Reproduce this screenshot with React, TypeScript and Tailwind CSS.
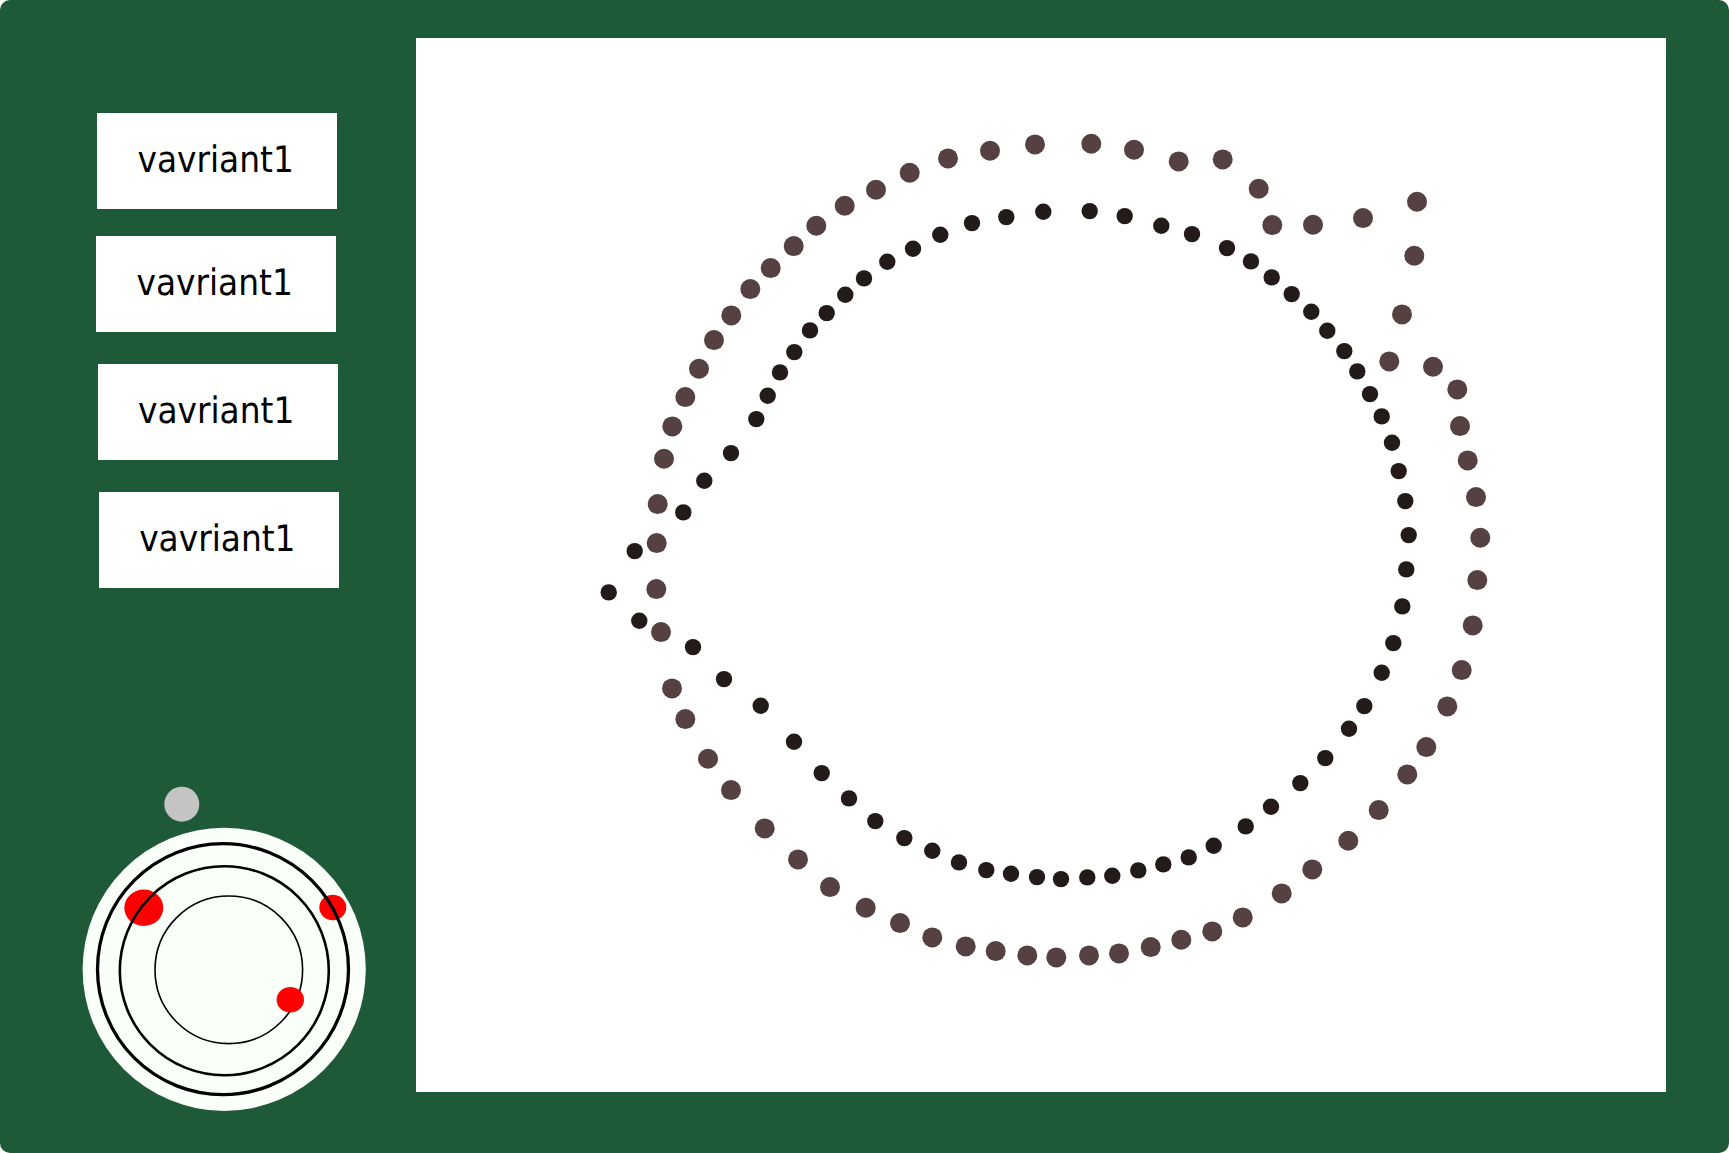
const brown: [number, number][] = [
  [948, 158], [909.7, 172.3], [876, 189.3], [844.7, 205.3], [816.3, 225.3], [793.7, 245.7], [770.7, 267.7],
  [750.3, 288.7], [731.3, 315], [714, 339.7], [699, 368.3], [685.3, 396.7], [672.3, 426], [664, 458.3], [657.7, 503.7],
  [656.7, 542.7], [656.3, 588.7], [661, 631.7], [672, 688], [685.3, 718.7], [708, 758.3], [731, 789.7], [764.7, 828],
  [798, 859], [830, 886.7], [865.7, 907.3], [900, 922.7], [932.3, 937], [965.7, 946], [995.7, 950.7], [1027.3, 955],
  [1056.3, 957], [1089, 955], [1119, 953], [1150.7, 946.7], [1181.3, 939.3], [1212.3, 931], [1242.7, 917], [1281.7, 893],
  [1312.3, 869], [1348.3, 840.3], [1378.7, 809.7], [1407.3, 774], [1426.3, 746.7], [1447.3, 706], [1461.7, 669.7],
  [1472.7, 625], [1477.3, 579.7], [1480.3, 537.3], [1476, 496.7], [1467.7, 460], [1460, 425.7], [1457.3, 389],
  [1433, 366.3], [1389.3, 361], [1402, 314], [1414.3, 255.3], [1417, 201.3], [1363, 217.7], [1313, 224.3], [1272.3, 224.7],
  [1258.7, 188.3], [1222.7, 159], [1178.7, 161], [1134, 149.3], [1091.3, 143.3], [1035, 144], [990, 150.3],
];

const dark: [number, number][] = [
  [972, 222.7], [940.3, 234.3], [913, 248.3], [887.3, 261.3], [864, 278], [845.3, 294.3], [826.7, 312.7], [810, 330],
  [794.3, 351.7], [780, 372], [767.7, 395.3], [756.3, 418.7], [731, 452.7], [704.3, 480.3], [683.3, 512], [634.7, 550.7],
  [608.7, 592], [639.3, 620.3], [693, 646.7], [724, 678.7], [760.7, 705.3], [794, 741.3], [821.7, 772.7], [849, 798],
  [875.3, 820.7], [904.3, 837.7], [932.3, 850.3], [959, 862], [986.3, 869.7], [1011, 873.3], [1037, 876.7], [1061, 878.7],
  [1087.3, 877], [1112.3, 875.3], [1138.3, 870], [1163.3, 864], [1188.7, 857], [1213.7, 845.3], [1245.7, 826], [1271, 806.3],
  [1300.3, 782.7], [1325.3, 757.7], [1349, 728.3], [1364.3, 705.7], [1381.7, 672.3], [1393.3, 642.7], [1402.3, 606],
  [1406.3, 569], [1408.7, 534.7], [1405.3, 500.7], [1398.7, 470.7], [1392, 442.3], [1381.7, 416], [1370, 393.7],
  [1357.3, 371], [1344.3, 350.7], [1327.3, 330.3], [1311.3, 311.3], [1291.7, 293.7], [1271.7, 277], [1251, 261], [1227, 247.7],
  [1192, 233.7], [1161.3, 225.3], [1124.7, 215.7], [1089.7, 210.7], [1043.3, 211.3], [1006.3, 216.7],
];

function VariantButton({ className }: { className: string }) {
  return (
    <div
      className={`flex h-[96px] w-[240px] items-center bg-white pb-[1px] font-['DejaVu_Sans_Condensed','DejaVu_Sans',sans-serif] text-[36.5px] font-stretch-condensed text-black [text-rendering:geometricPrecision] ${className}`}
    >
      vavriant1
    </div>
  );
}

function Dial() {
  return (
    <svg className="mt-[198px] ml-[82px] block" width="284" height="325" viewBox="82 786 284 325">
      <circle cx="181.8" cy="804.2" r="17.5" fill="#c4c4c4" />
      <circle cx="224.2" cy="969.3" r="141.6" fill="#fbfffa" />
      <ellipse cx="143.8" cy="907.8" rx="19.5" ry="18.2" fill="#ff0000" />
      <ellipse cx="332.8" cy="907.5" rx="13.5" ry="12.8" fill="#ff0000" />
      <circle cx="223" cy="969.2" r="125.5" fill="none" stroke="#000" strokeWidth="3.3" />
      <circle cx="224.3" cy="970.7" r="104.5" fill="none" stroke="#000" strokeWidth="2.6" />
      <circle cx="228.8" cy="969.8" r="73.8" fill="none" stroke="#000" strokeWidth="1.6" />
      <ellipse cx="290.3" cy="999.8" rx="13.7" ry="12.8" fill="#ff0000" />
    </svg>
  );
}

export default function App() {
  return (
    <div className="h-[1153px] w-full bg-white">
      <div className="flex h-full w-full rounded-[10px] bg-[#1f5a38]">
        <div className="w-[416px] shrink-0 pt-[113px]">
          <VariantButton className="ml-[97px] pl-[40.5px]" />
          <VariantButton className="mt-[27px] ml-[96px] pl-[40.5px]" />
          <VariantButton className="mt-[31.7px] ml-[98px] pl-[40px]" />
          <VariantButton className="mt-[32.3px] ml-[99.2px] pl-[40px]" />
          <Dial />
        </div>
        <div className="pt-[38px]">
          <div className="h-[1054px] w-[1250px] bg-white">
            <svg className="block" width="1250" height="1054" viewBox="416 37.6 1250 1054">
              {brown.map(([x, y], i) => (
                <circle key={i} cx={x} cy={y} r="10" fill="#554142" />
              ))}
              {dark.map(([x, y], i) => (
                <circle key={i} cx={x} cy={y} r="8.2" fill="#231a1a" />
              ))}
            </svg>
          </div>
        </div>
      </div>
    </div>
  );
}
